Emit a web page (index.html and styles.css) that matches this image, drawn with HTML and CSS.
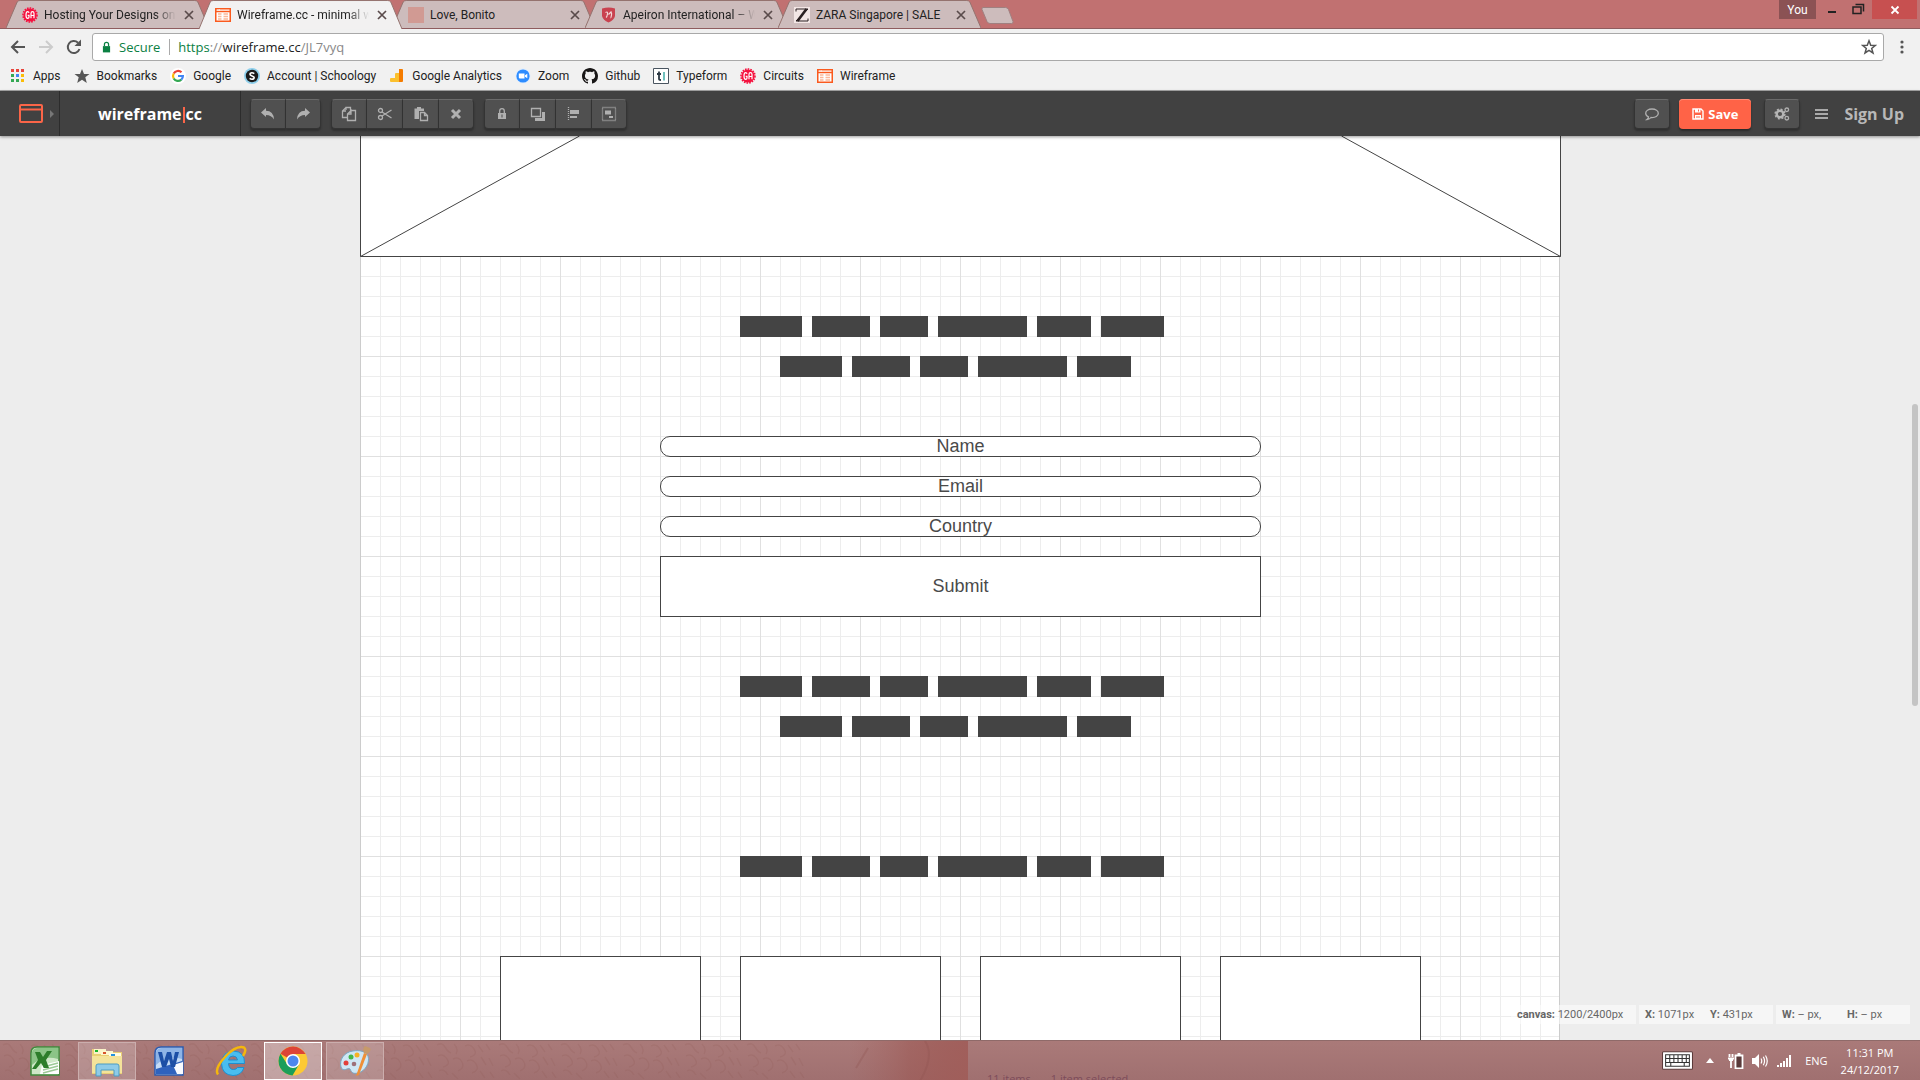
FILE: index.html
```html
<!DOCTYPE html>
<html lang="en">
<head>
<meta charset="utf-8">
<title>Wireframe.cc - minimal wireframing tool</title>
<link rel="stylesheet" href="styles.css">
</head>
<body>
<svg class="defs" width="0" height="0" aria-hidden="true">
  <symbol id="i-ga" viewBox="0 0 16 16"><circle cx="8" cy="8" r="6.6" fill="#f5123f"/><circle cx="8" cy="8" r="7" fill="none" stroke="#f5123f" stroke-width="1.6" stroke-dasharray="1.6 1.1"/><path d="M7 5.8Q6.800 4.700 5.600 4.700Q4 4.700 4 8Q4 11.300 5.600 11.300Q7 11.300 7 10V8.300H5.700M9 11.300V6.500Q9 4.700 10.500 4.700Q12 4.700 12 6.500V11.300M9 8.500H12" fill="none" stroke="#fff" stroke-width="1.200"/></symbol>
  <symbol id="i-wf" viewBox="0 0 16 16"><rect x=".75" y="1.75" width="14.500" height="12.500" fill="#fff" stroke="#fa5a1e" stroke-width="1.500"/><path d="M1 4.500H15" stroke="#fa5a1e" stroke-width="1.500"/><path d="M2.500 3H5" stroke="#fff" stroke-dasharray="1 .6"/><path d="M3 7H6.500M3 9.500H6.500M3 12H6.500M8.500 7H13M8.500 9.500H13M8.500 12H13" stroke="#fbb899" stroke-width="1.400"/></symbol>
  <symbol id="i-x" viewBox="0 0 10 10"><path d="M1 1L9 9M9 1L1 9" stroke="#5a4b4b" stroke-width="1.700"/></symbol>
  <symbol id="tab-shape" viewBox="0 0 200 28" preserveAspectRatio="none"><path d="M0 28L11 2Q12 .5 14 .5H186Q188 .5 189 2L200 28" stroke="#95736f" vector-effect="non-scaling-stroke"/></symbol>
</svg>

<header class="browser">
  <div class="tabstrip">
    <div class="tab"><svg class="shape"><use href="#tab-shape"/></svg><svg class="fav"><use href="#i-ga"/></svg><span class="title fade">Hosting Your Designs on</span><button class="close" aria-label="Close tab"><svg><use href="#i-x"/></svg></button></div>
    <div class="tab active"><svg class="shape"><use href="#tab-shape"/></svg><svg class="fav"><use href="#i-wf"/></svg><span class="title fade">Wireframe.cc - minimal w</span><button class="close" aria-label="Close tab"><svg><use href="#i-x"/></svg></button></div>
    <div class="tab"><svg class="shape"><use href="#tab-shape"/></svg><svg class="fav" viewBox="0 0 16 16"><path fill="#d19a93" d="M0 0H16V16H0z"/></svg><span class="title">Love, Bonito</span><button class="close" aria-label="Close tab"><svg><use href="#i-x"/></svg></button></div>
    <div class="tab"><svg class="shape"><use href="#tab-shape"/></svg><svg class="fav" viewBox="0 0 16 16"><path fill="#c9424f" d="M1 1.500Q8-.5 14 1.500V9Q13 13 7.500 15.500Q2 13 1 9z"/><path d="M4.500 5.500Q7 4 6.500 7T5 10.500M10.500 4.500L7.500 7.500M9 5.500Q11 5 10.500 8T9.500 10.500" fill="none" stroke="#f3d9d9" stroke-width="1.200"/></svg><span class="title fade">Apeiron International – W</span><button class="close" aria-label="Close tab"><svg><use href="#i-x"/></svg></button></div>
    <div class="tab"><svg class="shape"><use href="#tab-shape"/></svg><svg class="fav" viewBox="0 0 16 16"><path fill="#f3e6e5" d="M0 0H16V16H0z"/><path d="M2 4.500V2H14L2 14H14V11.500" fill="none" stroke="#2b2122"/><path d="M12.500 2L3.500 14" stroke="#2b2122" stroke-width="2.600"/></svg><span class="title">ZARA Singapore | SALE</span><button class="close" aria-label="Close tab"><svg><use href="#i-x"/></svg></button></div>
    <button class="newtab" aria-label="New tab"><svg viewBox="0 0 34 17"><path d="M2 .5H24.500Q26.500 .5 27.500 2.500L32 14.500Q32.500 16.500 30.500 16.500H9Q7 16.500 6 14.500L1 2.500Q.5 .5 2 .5z" fill="#cdbcbc" stroke="#a08080"/></svg></button>
    <div class="winctl">
      <button class="you">You</button>
      <button class="min" aria-label="Minimise"><svg viewBox="0 0 25 19"><path fill="#222" d="M9 11H17V13H9z"/></svg></button>
      <button class="max" aria-label="Restore"><svg viewBox="0 0 28 19"><path d="M11.500 4.500H19.500V11.500M9 7H17V13.500H9z" fill="none" stroke="#222" stroke-width="1.500"/></svg></button>
      <button class="exit" aria-label="Close"><svg viewBox="0 0 10 10"><path d="M1.500 1.500L8.500 8.500M8.500 1.500L1.500 8.500" stroke="#fff" stroke-width="1.800"/></svg></button>
    </div>
  </div>
  <div class="navbar">
    <button aria-label="Back"><svg viewBox="0 0 16 16"><path d="M15 8H2M8 2L2 8L8 14" fill="none" stroke="#555" stroke-width="2"/></svg></button>
    <button aria-label="Forward"><svg viewBox="0 0 16 16"><path d="M1 8H14M8 2L14 8L8 14" fill="none" stroke="#ccc" stroke-width="2"/></svg></button>
    <button aria-label="Reload"><svg viewBox="0 0 16 16"><path d="M13.500 10A6 6 0 1 1 12 3.700" fill="none" stroke="#555" stroke-width="2"/><path d="M15 .5V7H8.500z" fill="#555"/></svg></button>
    <div class="address">
      <svg class="lock" viewBox="0 0 10 12"><path d="M1 5H9V12H1z" fill="#0b8043"/><path d="M2.700 5V3.200A2.300 2.300 0 0 1 7.300 3.200V5" fill="none" stroke="#0b8043" stroke-width="1.400"/></svg>
      <span class="secure">Secure</span><span class="sep"></span>
      <span class="url"><span class="scheme">https</span>://<b>wireframe.cc</b>/JL7vyq</span>
      <svg class="star" viewBox="0 0 16 16"><path d="M8 1.800L9.700 6.200L14.400 6.400L10.700 9.400L12 14L8 11.400L4 14L5.300 9.400L1.600 6.400L6.300 6.200z" fill="none" stroke="#555" stroke-width="1.500"/></svg>
    </div>
    <button class="dots" aria-label="Menu"><svg viewBox="0 0 4 14"><circle cx="2" cy="2" r="1.600" fill="#555"/><circle cx="2" cy="7" r="1.600" fill="#555"/><circle cx="2" cy="12" r="1.600" fill="#555"/></svg></button>
  </div>
  <nav class="bookmarks">
    <a href="#"><svg viewBox="0 0 16 16"><path fill="#e8453c" d="M1 1h3v3H1zM6 1h3v3H6zM11 1h3v3h-3z"/><path fill="#34a853" d="M1 6h3v3H1zM1 11h3v3H1zM6 11h3v3H6z"/><path fill="#4285f4" d="M6 6h3v3H6z"/><path fill="#fbbc05" d="M11 6h3v3h-3zM11 11h3v3h-3z"/></svg>Apps</a>
    <a href="#"><svg viewBox="0 0 16 16"><path d="M8 1L10 6H15.500L11.300 9.300L12.800 15L8 11.700L3.200 15L4.700 9.300L.5 6H6z" fill="#575757"/></svg>Bookmarks</a>
    <a href="#"><svg viewBox="0 0 16 16"><circle cx="8" cy="8" r="8" fill="#fff"/><g fill="none" stroke-width="2.200"><path d="M11.500 4.300A5 5 0 0 0 3.700 5.500" stroke="#ea4335"/><path d="M3.700 5.500A5 5 0 0 0 3.700 10.500" stroke="#fbbc05"/><path d="M3.700 10.500A5 5 0 0 0 11.300 11.700" stroke="#34a853"/><path d="M11.300 11.700A5 5 0 0 0 12.900 8H8" stroke="#4285f4"/></g></svg>Google</a>
    <a href="#"><svg viewBox="0 0 16 16"><circle cx="8" cy="8" r="8" fill="#8fd0ec"/><circle cx="8" cy="8" r="6.200" fill="#1b1b1b"/><path d="M10.300 5.700Q8 4 6.300 5.300Q5.200 7 8 7.900Q10.900 8.900 9.900 10.500Q8 12 5.600 10.400" fill="none" stroke="#fff" stroke-width="1.600"/></svg>Account | Schoology</a>
    <a href="#"><svg viewBox="0 0 16 16"><path fill="#fbc02d" d="M1 11Q1 10 2 10H6V6Q6 5 7 5H10V14H2Q1 14 1 13z"/><path fill="#f57c00" d="M10 1H13Q14 1 14 2V13Q14 14 13 14H10z"/></svg>Google Analytics</a>
    <a href="#"><svg viewBox="0 0 16 16"><circle cx="8" cy="8" r="7.500" fill="#dcecff"/><circle cx="8" cy="8" r="6.600" fill="#2d8cff"/><path d="M3.800 5.500H9.500V10.500H5Q3.800 10.500 3.800 9.500zM10 7.200L12.300 5.700V10.300L10 8.800z" fill="#fff"/></svg>Zoom</a>
    <a href="#"><svg viewBox="0 0 16 16"><path fill="#181616" d="M8 0C3.580 0 0 3.580 0 8c0 3.540 2.290 6.530 5.470 7.590.4.070.55-.17.550-.38 0-.19-.01-.82-.01-1.490-2.010.37-2.530-.49-2.690-.94-.09-.23-.48-.94-.82-1.130-.28-.15-.68-.52-.01-.53.630-.01 1.080.58 1.230.82.720 1.210 1.870.87 2.330.66.070-.52.280-.87.510-1.070-1.780-.2-3.640-.89-3.640-3.950 0-.87.310-1.590.82-2.150-.08-.2-.36-1.020.08-2.120 0 0 .67-.21 2.200.82.640-.18 1.320-.27 2-.27s1.360.09 2 .27c1.530-1.040 2.200-.82 2.200-.82.440 1.100.16 1.920.08 2.120.51.560.82 1.270.82 2.150 0 3.070-1.870 3.750-3.650 3.950.29.250.54.730.54 1.480 0 1.070-.01 1.930-.01 2.200 0 .21.150.46.550.38A8.010 8.010 0 0 0 16 8c0-4.420-3.580-8-8-8z"/></svg>Github</a>
    <a href="#"><svg viewBox="0 0 16 16"><path d="M.5 .5H15.500V15.500H.5z" fill="#fff" stroke="#4a5560"/><path d="M6 3.500V11Q6 12 8 12M4 6H8" fill="none" stroke="#2d3a45" stroke-width="1.800"/><path d="M11 4V12.500" stroke="#6fc0bd" stroke-width="2"/></svg>Typeform</a>
    <a href="#"><svg viewBox="0 0 16 16"><use href="#i-ga"/></svg>Circuits</a>
    <a href="#"><svg viewBox="0 0 16 16"><use href="#i-wf"/></svg>Wireframe</a>
  </nav>
</header>

<div class="appbar">
  <button class="appicon" aria-label="Stencils"><svg viewBox="0 0 36 20"><rect x="2" y="1" width="22" height="17" rx="1" fill="none" stroke="#fb6548" stroke-width="2"/><path d="M2 5.500H24" stroke="#fb6548" stroke-width="2"/><path d="M4 3.500H9" stroke="#414141" stroke-dasharray="1 1"/><path d="M32 6L36 10L32 14z" fill="#777"/></svg></button>
  <a href="#" class="logo">wireframe<i></i>cc</a>
  <div class="tools">
    <div class="group">
      <button aria-label="Undo"><svg viewBox="0 0 16 16"><path d="M1 6.500L6 2V4.800Q13.500 4.800 14 13.500Q11.500 9 6 9V11z"/></svg></button>
      <button aria-label="Redo"><svg viewBox="0 0 16 16"><path d="M15 6.500L10 2V4.800Q2.500 4.800 2 13.500Q4.500 9 10 9V11z"/></svg></button>
    </div>
    <div class="group">
      <button aria-label="Copy"><svg viewBox="0 0 16 16"><path d="M5 4V1.500H9.500V5M5 1.500L1.500 5V11.500H6M1.500 5H5M10 4.500H14.500V14.500H6.500V8L10 4.500V8H6.500" class="line"/></svg></button>
      <button aria-label="Cut"><svg viewBox="0 0 16 16"><circle cx="3.500" cy="4.500" r="2" class="line"/><circle cx="3.500" cy="11.500" r="2" class="line"/><path d="M5 6L14.500 12M5 10L14.500 4" class="line"/></svg></button>
      <button aria-label="Paste"><svg viewBox="0 0 16 16"><path d="M1.500 2.500H4V1H8V2.500H11V5H6V13H1.500z"/><path d="M7.500 6.500H11.500L14.500 9.500V14.500H7.500zM11.500 6.500V9.500H14.500" class="line"/></svg></button>
      <button aria-label="Delete"><svg viewBox="0 0 16 16"><path d="M4 4L12 12M12 4L4 12" class="thick"/></svg></button>
    </div>
    <div class="group">
      <button aria-label="Lock"><svg viewBox="0 0 16 16"><path d="M4 7H12V13H4z"/><path d="M5.700 7V5A2.300 2.300 0 0 1 10.300 5V7" class="line"/><path d="M8 8.500V11.500" stroke="#4c4c4c"/></svg></button>
      <button aria-label="Arrange"><svg viewBox="0 0 16 16"><path d="M1.500 2.500H10.500V10.500H1.500z" class="line"/><path d="M12 6H15V15H5V12H12z"/></svg></button>
      <button aria-label="Align"><svg viewBox="0 0 16 16"><path d="M2.500 1V15" class="line" stroke-dasharray="1 1"/><path d="M4 4H13V8H4zM4 10H11V12H4z"/></svg></button>
      <button aria-label="Group"><svg viewBox="0 0 16 16"><path d="M1.500 1.500H14.500V14.500H1.500z" class="line" stroke-dasharray="1 1"/><path d="M4 4.500H10V8.500H4zM8 10H12V12H8z"/></svg></button>
    </div>
  </div>
  <div class="right">
    <button class="single" aria-label="Comments"><svg viewBox="0 0 16 16"><path d="M8 3C4.500 3 1.700 4.700 1.700 7.300C1.700 9 2.800 10.200 4.500 10.900C4.500 12 4 12.700 3 13.500C5 13.300 6.300 12.500 7 11.500C11.500 11.800 14.300 10 14.300 7.300C14.300 4.700 11.500 3 8 3z" class="line"/></svg></button>
    <button class="save"><svg viewBox="0 0 12 12"><path d="M1 1H9L11 3V11H1z" fill="none" stroke="#fff" stroke-width="1.400"/><path d="M3 1H8.500V4.500H3zM3 7H9V11H3z" fill="#fff"/><path d="M6.500 1.500V3.500M4 9H8" stroke="#fb6548"/></svg>Save</button>
    <button class="single gear" aria-label="Settings"><svg viewBox="0 0 16 16"><circle cx="6" cy="8" r="3.300" fill="none" stroke="#b5b5b5" stroke-width="2.400"/><circle cx="6" cy="8" r="4.900" fill="none" stroke="#b5b5b5" stroke-width="1.400" stroke-dasharray="2 1.850"/><circle cx="12.800" cy="3.800" r="1.800" class="line"/><circle cx="12.800" cy="12.200" r="1.800" class="line"/></svg></button>
    <button class="burger" aria-label="Menu"><svg viewBox="0 0 13 10"><path d="M0 1H13M0 5H13M0 9H13" stroke="#aaa" stroke-width="1.800"/></svg></button>
    <a href="#" class="signup">Sign Up</a>
  </div>
</div>

<main class="workspace">
  <div class="canvas">
    <svg class="hero" viewBox="0 0 1201 121"><path d="M.5 0V120.500H1200.500V0M.5 120.500L219.500 0M1200.500 120.500L981.500 0" fill="none" stroke="#444"/></svg>
    <div class="copy">
      <div class="words"><span></span><span></span><span></span><span></span><span></span><span></span></div>
      <div class="words short"><span></span><span></span><span></span><span></span><span></span></div>
    </div>
    <form class="form">
      <input type="text" placeholder="Name" aria-label="Name">
      <input type="text" placeholder="Email" aria-label="Email">
      <input type="text" placeholder="Country" aria-label="Country">
      <button type="button">Submit</button>
    </form>
    <div class="copy">
      <div class="words"><span></span><span></span><span></span><span></span><span></span><span></span></div>
      <div class="words short"><span></span><span></span><span></span><span></span><span></span></div>
    </div>
    <div class="copy heading">
      <div class="words"><span></span><span></span><span></span><span></span><span></span><span></span></div>
    </div>
    <div class="cards"><div></div><div></div><div></div><div></div></div>
  </div>
  <div class="scroll"></div>
  <div class="status">
    <div><span><b>canvas:</b> 1200/2400px</span></div>
    <div class="pair"><span><b>X:</b> 1071px</span><span><b>Y:</b> 431px</span></div>
    <div class="pair"><span><b>W:</b> – px,</span><span><b>H:</b> – px</span></div>
  </div>
</main>

<footer class="taskbar">
  <svg class="leather" aria-hidden="true">
    <defs>
      <pattern id="skin" width="62" height="40" patternUnits="userSpaceOnUse"><path d="M3 4Q8 1 11 6T17 12M20 3Q25 8 22 13M4 15Q9 12 13 18T9 26M19 18Q25 15 28 21T24 30M31 5Q36 2 40 8T36 16M44 4L49 11M52 3L56 9M33 20Q38 17 42 23T38 32M47 16L52 24M55 17L59 25M5 30Q10 27 14 34M18 32L24 38M46 30L51 37M56 31L60 37" fill="none" stroke="#874f4d" stroke-width="1.500" opacity=".16"/></pattern>
      <linearGradient id="fold"><stop offset="0" stop-color="#a3605c" stop-opacity="0"/><stop offset=".5" stop-color="#9c544f" stop-opacity=".5"/><stop offset="1" stop-color="#a05c58" stop-opacity=".9"/></linearGradient>
    </defs>
    <rect width="805" height="40" fill="url(#skin)"/><rect x="850" width="118" height="40" fill="url(#fold)"/>
    <path d="M868 7Q862 17 856 27M925 0Q935 15 920 40" fill="none" stroke="#8f5350" stroke-width="2" opacity=".3"/>
  </svg>
  <div class="apps">
    <button aria-label="Excel"><svg viewBox="0 0 32 32"><path d="M2 8Q2 2 8 2H30V30H2z" fill="#cfe8c8" stroke="#3f8a3b" stroke-width="1.500"/><path d="M3 7Q4 3 9 3H29V14Q14 10 3 20z" fill="#8cc487"/><path d="M13 20L30 16V29H11z" fill="#fff"/><path d="M14 22L29 18M14 25L29 21M14 28L29 24" stroke="#9cc996" stroke-width="1.500"/><path d="M6 7H11L14 12L18 6H23L17 15L20 23H15L12 18L7 24H3L9 15z" fill="#2d7d2a"/></svg></button>
    <button class="open" aria-label="File Explorer"><svg viewBox="0 0 32 32"><path d="M1 8V4H9L11 7H31V29H1z" fill="#e9cf74"/><path d="M3 4H15V9H3z" fill="#faf3c8"/><path d="M10 6H22V10H10z" fill="#fdf6cf"/><path d="M18 8H30V12H18z" fill="#fffbe2"/><path d="M4 5H7V7H4z" fill="#19b52a"/><path d="M12 7H15V9H12z" fill="#d9532b"/><path d="M20 9H24V11H20z" fill="#2492e0"/><path d="M1 11H31V28H1z" fill="#f4e39a"/><path d="M5 31V21Q5 19 7 19H26Q28 19 28 21V31H23V25H10V31z" fill="#8ecbe8" stroke="#4d9cc2"/></svg></button>
    <button aria-label="Word"><svg viewBox="0 0 32 32"><path d="M2 8Q2 2 8 2H30V30H2z" fill="#c5dcf6" stroke="#2a5bb0" stroke-width="1.500"/><path d="M3 7Q4 3 9 3H29V14Q14 10 3 20z" fill="#8eb4e6"/><path d="M3 24L29 16V29H3z" fill="#2f62bd"/><path d="M20 20L30 17V29H24z" fill="#f8fbff"/><path d="M5 7H9L11 16L14 7H18L20 16L22 7H26L22 22H18L16 14L13 22H9z" fill="#1c4fa6"/></svg></button>
    <button aria-label="Internet Explorer"><svg viewBox="0 0 32 32"><path d="M29.500 18.500H13.500Q14 24.500 18.500 24.500Q21.500 24.500 22.500 22.500H29Q26.500 30.500 18 30.500Q7 30 6.500 18.500Q7.500 6 18.500 6Q30 6.500 29.500 18.500zM13.500 15H22.500Q22 11 18 11Q14 11 13.500 15z" fill="#49bdf0" stroke="#1f8fd0"/><path d="M3 29.500Q-1 24 10 12T29 2.500Q32 5 28 11" fill="none" stroke="#f4b70d" stroke-width="2.500"/></svg></button>
    <button class="open current" aria-label="Chrome"><svg viewBox="0 0 32 32"><circle cx="16" cy="16" r="14.500" fill="#fcc934"/><path d="M16 16L3.500 8.700A14.500 14.500 0 0 1 28.600 9H16z" fill="#dd4437"/><path d="M3.500 8.700A14.500 14.500 0 0 0 15.500 30.500L22 19.500L10 19z" fill="#1b9e5a"/><circle cx="16" cy="16" r="7" fill="#fff"/><circle cx="16" cy="16" r="5.500" fill="#4c86ee"/></svg></button>
    <button class="open" aria-label="Paint"><svg viewBox="0 0 32 32"><path d="M14 6C5 7 0 15 2 22C4 28 9 22 11 24C13 28 14 29 19 28C27 26 31 17 29 11C27 6 20 5 14 6z" fill="#cfe7f5" stroke="#7aa9c6"/><circle cx="12" cy="12" r="2.500" fill="#43b649"/><circle cx="18" cy="10" r="2.500" fill="#f4b223"/><circle cx="7" cy="18" r="2.500" fill="#e2403b"/><circle cx="15" cy="19" r="2.300" fill="#9d7079"/><path d="M17 31L25 8L28 9L20 30z" fill="#ee9038"/><path d="M25 8Q23 3 26 1L31 3Q33 6 28 9z" fill="#c79a6b"/></svg></button>
  </div>
  <div class="ghost"><span>11 items</span><span>1 item selected</span></div>
  <div class="tray">
    <svg class="kbd" viewBox="0 0 30 18"><rect x=".5" y=".5" width="29" height="17" rx="1" fill="#fff" stroke="#5c3a3a"/><path d="M3.500 3.500H26.500V14.500H3.500zM3.500 7H26.500M3.500 11H26.500M7.500 3.500V11M11.500 3.500V11M15.500 3.500V11M19.500 3.500V11M23.500 3.500V11M8.500 11V14.500M21.500 11V14.500" fill="none" stroke="#333"/></svg>
    <svg class="up" viewBox="0 0 8 5"><path d="M4 0L8 5H0z" fill="#fff"/></svg>
    <svg class="bat" viewBox="0 0 16 16"><path d="M7.500 2.500H14.500V15.500H7.500zM9.500 1H12.500" fill="#5a3a3a" stroke="#fff" stroke-width="1.800"/><path d="M1.500 1V4M4.500 1V4M0 5.500H6M1 7H5M3 7V15" stroke="#fff" stroke-width="1.800"/></svg>
    <svg class="snd" viewBox="0 0 16 16"><path d="M0 5H3L7 1V15L3 11H0z" fill="#fff"/><path d="M9 5.500Q10.500 8 9 10.500M11.300 3.800Q13.800 8 11.300 12.200M13.500 2.500Q17 8 13.500 13.500" fill="none" stroke="#fff" stroke-width="1.200"/></svg>
    <svg class="net" viewBox="0 0 16 16"><path d="M1 12H3V14H1zM4 10H6V14H4zM7 8H9V14H7zM10 5H12V14H10zM13 2H15V14H13z" fill="#fff"/></svg>
    <span class="lang">ENG</span>
    <div class="clock"><span>11:31 PM</span><span>24/12/2017</span></div>
  </div>
</footer>
</body>
</html>
```
FILE: styles.css
```css
* { box-sizing: border-box; }
body {
  margin: 0;
  height: 100vh;
  display: flex;
  flex-direction: column;
  overflow: hidden;
  background: #ededed;
  font-family: Roboto, "Noto Sans", sans-serif;
  font-size: 12px;
  color: #222;
}
button {
  margin: 0;
  padding: 0;
  border: 0;
  background: none;
  font: inherit;
  color: inherit;
  display: flex;
  align-items: center;
  justify-content: center;
}
a { color: inherit; text-decoration: none; }
svg { display: block; flex: none; }
.defs { position: absolute; }
.address, .appbar, .taskbar { font-family: "Open Sans", "Noto Sans", sans-serif; }

/* Browser chrome */
.browser { flex: none; background: #f1f1f1; border-bottom: 1px solid #a8a8a8; }
.tabstrip {
  height: 29px;
  display: flex;
  padding-left: 6px;
  background: #c17171;
  border-bottom: 1px solid #8f5c5e;
}
.tab {
  position: relative;
  width: 203px;
  height: 29px;
  margin-right: -10px;
  padding: 1px 13px 0 16px;
  display: flex;
  align-items: center;
  gap: 6px;
}
.shape { position: absolute; inset: 0; width: 100%; height: 28px; fill: #cdbcbc; }
.active { z-index: 1; }
.active .shape { height: 29px; fill: #f2f1f1; }
.fav { position: relative; width: 16px; height: 16px; }
.title { position: relative; flex: 1; min-width: 0; overflow: hidden; white-space: nowrap; line-height: 18px; }
.fade { -webkit-mask-image: linear-gradient(90deg, #000 84%, transparent); mask-image: linear-gradient(90deg, #000 84%, transparent); }
.close { position: relative; width: 14px; height: 16px; }
.close svg { width: 10px; height: 10px; }
.newtab { margin: 7px 0 0 10px; align-self: flex-start; }
.newtab svg { width: 34px; height: 17px; }
.winctl { margin-left: auto; margin-right: 3px; height: 19px; display: flex; color: #fff; }
.you { width: 37px; background: #8b5254; }
.min { width: 25px; margin-left: 3px; }
.max { width: 28px; }
.min svg, .max svg { width: 100%; height: 19px; }
.exit { width: 45px; background: #c75050; }
.exit svg { width: 10px; height: 10px; }

.navbar { height: 36px; padding: 4px 12px 4px 10px; display: flex; align-items: center; gap: 12px; }
.navbar > button { width: 16px; height: 28px; }
.navbar > button svg { width: 16px; height: 16px; }
.address {
  flex: 1;
  height: 28px;
  margin-left: -2px;
  padding: 0 6px 0 9px;
  display: flex;
  align-items: center;
  background: #fff;
  border: 1px solid #a9a9a9;
  border-radius: 3px;
  font-size: 13px;
  color: #888;
}
.lock { width: 9px; height: 12px; }
.secure { margin-left: 8px; color: #0b8043; }
.sep { width: 1px; height: 16px; margin: 0 8px 0 9px; background: #aaa; }
.url b { font-weight: 400; color: #222; }
.scheme { color: #0b8043; }
.star { width: 16px; height: 16px; margin-left: auto; }
.navbar > .dots { width: 12px; }
.navbar > .dots svg { width: 4px; height: 14px; }

.bookmarks { height: 25px; padding: 0 10px 3px; display: flex; align-items: center; gap: 13px; white-space: nowrap; }
.bookmarks a { display: flex; align-items: center; gap: 7px; }
.bookmarks svg { width: 16px; height: 16px; }

/* Application toolbar */
.appbar {
  flex: none;
  height: 45px;
  display: flex;
  align-items: center;
  background: #414141;
  box-shadow: 0 1px 3px rgba(0, 0, 0, .4);
  z-index: 2;
}
.appicon { width: 60px; height: 45px; padding-left: 13px; border-right: 1px solid #2c2c2c; }
.appicon svg { width: 36px; height: 20px; }
.logo {
  width: 181px;
  height: 45px;
  display: flex;
  align-items: center;
  justify-content: center;
  border-right: 1px solid #2c2c2c;
  color: #fff;
  font-size: 16px;
  font-weight: 700;
}
.logo i { width: 2px; height: 16px; margin: 2px 1px 0; background: #fb6548; }
.tools { display: flex; gap: 10px; margin-left: 9px; }
.group { display: flex; }
.group button, .single {
  width: 36px;
  height: 30px;
  background: #505050;
  border: 1px solid #343434;
  border-top-color: #6a6a6a;
  border-left-width: 0;
  box-shadow: 0 2px 2px #303030;
}
.group button:first-child { border-left-width: 1px; border-radius: 4px 0 0 4px; }
.group button:last-child { width: 35px; border-radius: 0 4px 4px 0; }
.group svg, .single svg { width: 16px; height: 16px; fill: #b0b0b0; }
.group .line, .single .line { fill: none; stroke: #b0b0b0; stroke-width: 1.3; }
.group .thick { stroke: #b0b0b0; stroke-width: 3; }
.single { border-left-width: 1px; border-radius: 4px; }
.right { margin-left: auto; padding-right: 16px; display: flex; align-items: center; color: #b8b8b8; }
.save {
  width: 72px;
  height: 30px;
  margin: 0 13px 0 9px;
  gap: 4px;
  background: #ff6347;
  border-radius: 4px;
  box-shadow: inset 0 1px 0 #ff8b76, 0 2px 2px #2a2a2a;
  color: #fff;
  font-size: 13px;
  font-weight: 700;
}
.save svg { width: 12px; height: 12px; }
.burger { margin: 0 16px 0 15px; }
.burger svg { width: 13px; height: 10px; }
.signup { font-size: 16px; font-weight: 700; }

/* Drawing canvas */
.workspace { flex: 1; min-height: 0; position: relative; overflow: hidden; }
.canvas {
  width: 1200px;
  min-height: 100%;
  margin: 0 auto;
  background-color: #fff;
  background-image:
    linear-gradient(90deg, #e0e0e0 1px, transparent 1px),
    linear-gradient(#e0e0e0 1px, transparent 1px),
    linear-gradient(90deg, #ededed 1px, transparent 1px),
    linear-gradient(#ededed 1px, transparent 1px);
  background-size: 100px 100px, 100px 100px, 20px 20px, 20px 20px;
  background-position: 0 20px;
  box-shadow: inset 1px 0 #ccc, inset -1px 0 #ccc;
}
.hero { width: 1201px; height: 121px; background: #fff; }
.copy { padding: 59px 0 0 380px; display: flex; flex-direction: column; gap: 19px; }
.words { display: grid; grid-template-columns: 62px 58px 48px 89px 54px 63px; column-gap: 10px; height: 21px; }
.words span { background: #444; }
.short { padding-left: 40px; }
.form { width: 601px; margin: 59px 0 0 300px; display: flex; flex-direction: column; gap: 19px; }
.form input, .form button {
  height: 21px;
  padding: 0;
  border: 1px solid #444;
  border-radius: 10px;
  background: #fff;
  color: #4a4a4a;
  font-family: "Liberation Sans", Arial, sans-serif;
  font-size: 18px;
  line-height: 19px;
  text-align: center;
}
.form input::placeholder { color: #4a4a4a; opacity: 1; }
.form button { height: 61px; border-radius: 0; }
.heading { padding-top: 119px; }
.cards { margin: 79px 0 0 140px; display: flex; gap: 39px; }
.cards div { width: 201px; height: 201px; border: 1px solid #444; background: #fff; }
.scroll { position: absolute; top: 268px; right: 2px; width: 6px; height: 302px; border-radius: 3px; background: #c4c4c4; }
.status {
  position: absolute;
  right: 10px;
  bottom: 16px;
  display: flex;
  gap: 3px;
  font-size: 11px;
  line-height: 20px;
  color: #666;
}
.status div { height: 19px; padding: 0 6px; background: rgba(255, 255, 255, .5); }
.status div:first-child { width: 125px; }
.status .pair { width: 134px; display: grid; grid-template-columns: 65px 1fr; }

/* Taskbar */
.taskbar {
  flex: none;
  position: relative;
  height: 40px;
  display: flex;
  align-items: center;
  padding: 0 21px 0 16px;
  background: linear-gradient(#aa7a79, #a07070);
  border-top: 1px solid #8f6a69;
  overflow: hidden;
  color: #fff;
  font-size: 11px;
}
.leather { position: absolute; inset: 0; width: 968px; height: 40px; }
.apps { position: relative; display: flex; gap: 4px; }
.apps button { width: 58px; height: 38px; }
.apps svg { width: 32px; height: 32px; }
.apps .open { background: rgba(255, 255, 255, .2); border: 1px solid #cbaead; }
.apps .current { background: rgba(255, 255, 255, .35); border-color: #fff; }
.ghost { align-self: flex-start; margin: 30px 0 0 603px; display: flex; gap: 20px; color: #7d4c5b; line-height: 16px; }
.tray { margin-left: auto; display: flex; align-items: center; }
.kbd { width: 31px; height: 19px; }
.up { width: 8px; height: 5px; margin: 0 14px 0 13px; }
.bat, .snd, .net { width: 16px; height: 16px; margin-right: 8px; }
.lang { margin: 0 13px 0 5px; }
.clock { display: flex; flex-direction: column; align-items: center; line-height: 17px; }
```
